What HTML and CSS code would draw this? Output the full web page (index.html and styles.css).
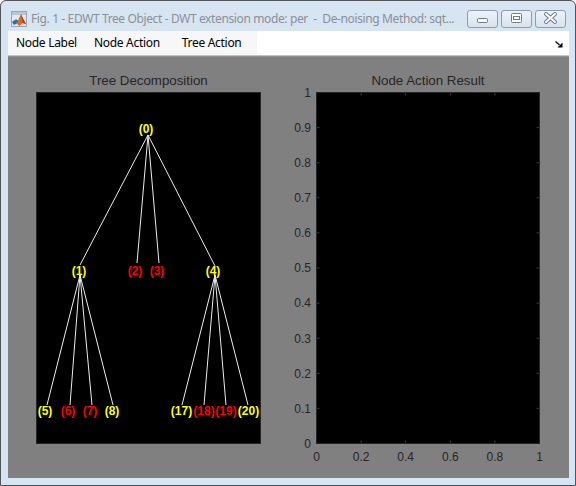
FILE: index.html
```html
<!DOCTYPE html>
<html>
<head>
<meta charset="utf-8">
<link rel="stylesheet" href="styles.css">
</head>
<body>
<div class="window">
  <div class="titlebar">
    <svg class="app-icon" width="16" height="16" viewBox="0 0 16 16">
      <rect x="0.5" y="0.5" width="15" height="15" fill="#dfe7f0" stroke="#9aa6b4"/>
      <rect x="1" y="1" width="14" height="3" fill="#b8c6d6"/>
      <path d="M1 11 L5 8.5 L7 9.5 L10 3 L12 7.5 L15 13 L11.5 12 L8.5 15 L5.5 12.5 Z" fill="#e2681b"/>
      <path d="M1 11 L5 8.5 L7 9.5 L5.5 12.5 L3 14 Z" fill="#2d6bb3"/>
      <path d="M10 3 L12 7.5 L15 13 L11.5 12 Z" fill="#b8431a"/>
    </svg>
    <span class="title">Fig. 1 - EDWT Tree Object - DWT extension mode: per  -  De-noising Method: sqt...</span>
    <div class="win-buttons">
      <div class="win-btn">
        <svg width="31" height="16" viewBox="0 0 31 16"><rect x="10.5" y="7.5" width="10" height="4" rx="1" fill="#fff" stroke="#6f7c8f"/></svg>
      </div>
      <div class="win-btn">
        <svg width="31" height="16" viewBox="0 0 31 16"><rect x="10.5" y="2.5" width="10" height="9" rx="1" fill="#fff" stroke="#6f7c8f"/><rect x="12.5" y="5.5" width="6" height="3" fill="#fff" stroke="#6f7c8f"/></svg>
      </div>
      <div class="win-btn">
        <svg width="31" height="16" viewBox="0 0 31 16"><path d="M11 3 L20 11 M20 3 L11 11" stroke="#6f7c8f" stroke-width="4" stroke-linecap="round"/><path d="M11 3 L20 11 M20 3 L11 11" stroke="#fff" stroke-width="2" stroke-linecap="round"/></svg>
      </div>
    </div>
  </div>
  <div class="client">
    <div class="menubar">
      <div class="menus">
        <span class="menu-item first">Node Label</span>
        <span class="menu-item">Node Action</span>
        <span class="menu-item wide">Tree Action</span>
      </div>
      <svg class="dock" width="8" height="7" viewBox="0 0 8 7"><path d="M0.5 0.5 L4.5 4" stroke="#000" stroke-width="1.3"/><path d="M7.5 1.5 L7.5 6.5 L2.5 6.5 Z" fill="#000"/></svg>
    </div>
    <div class="figure">
      <div class="axes">
        <div class="ax-title">Tree Decomposition</div>
        <svg class="plot" width="225" height="352" viewBox="0 0 225 352">
          <rect x="0.5" y="0.5" width="224" height="351" fill="#000" stroke="#262626"/>
          <g class="edges">
            <line x1="112" y1="43" x2="44" y2="173"/>
            <line x1="112" y1="43" x2="101" y2="171"/>
            <line x1="112" y1="43" x2="123" y2="171"/>
            <line x1="112" y1="43" x2="179" y2="174"/>
            <line x1="44" y1="183" x2="11" y2="313"/>
            <line x1="44" y1="183" x2="34" y2="313"/>
            <line x1="44" y1="183" x2="56" y2="313"/>
            <line x1="44" y1="183" x2="77" y2="313"/>
            <line x1="179" y1="183" x2="146" y2="313"/>
            <line x1="179" y1="183" x2="168" y2="313"/>
            <line x1="179" y1="183" x2="190" y2="313"/>
            <line x1="179" y1="183" x2="212" y2="313"/>
          </g>
          <g class="nodes">
            <text class="y" x="110" y="40.5">(0)</text>
            <text class="y" x="43" y="182.5">(1)</text>
            <text class="r" x="99" y="182.5">(2)</text>
            <text class="r" x="121" y="182.5">(3)</text>
            <text class="y" x="177" y="182.5">(4)</text>
            <text class="y" x="9" y="322.5">(5)</text>
            <text class="r" x="32" y="322.5">(6)</text>
            <text class="r" x="54" y="322.5">(7)</text>
            <text class="y" x="76" y="322.5">(8)</text>
            <text class="y" x="145.5" y="322.5">(17)</text>
            <text class="r" x="168" y="322.5">(18)</text>
            <text class="r" x="190" y="322.5">(19)</text>
            <text class="y" x="212.5" y="322.5">(20)</text>
          </g>
        </svg>
      </div>
      <div class="axes">
        <div class="ax-title right">Node Action Result</div>
        <svg class="plot" width="272" height="380" viewBox="0 0 272 380">
          <rect x="40.5" y="0.5" width="223" height="351" fill="#000" stroke="#262626"/>
          <g class="ticks">
            <path d="M85.1 1 v2.5 M129.7 1 v2.5 M174.3 1 v2.5 M218.9 1 v2.5 M85.1 351 v-2.5 M129.7 351 v-2.5 M174.3 351 v-2.5 M218.9 351 v-2.5"/>
            <path d="M41 35.6 h2.5 M41 70.7 h2.5 M41 105.8 h2.5 M41 140.9 h2.5 M41 176 h2.5 M41 211.1 h2.5 M41 246.2 h2.5 M41 281.3 h2.5 M41 316.4 h2.5"/>
            <path d="M263 35.6 h-2.5 M263 70.7 h-2.5 M263 105.8 h-2.5 M263 140.9 h-2.5 M263 176 h-2.5 M263 211.1 h-2.5 M263 246.2 h-2.5 M263 281.3 h-2.5 M263 316.4 h-2.5"/>
          </g>
          <g class="ylabels">
            <text x="35" y="4.8">1</text>
            <text x="35" y="39.9">0.9</text>
            <text x="35" y="75">0.8</text>
            <text x="35" y="110.1">0.7</text>
            <text x="35" y="145.2">0.6</text>
            <text x="35" y="180.3">0.5</text>
            <text x="35" y="215.4">0.4</text>
            <text x="35" y="250.5">0.3</text>
            <text x="35" y="285.6">0.2</text>
            <text x="35" y="320.7">0.1</text>
            <text x="35" y="355.8">0</text>
          </g>
          <g class="xlabels">
            <text x="40.5" y="369">0</text>
            <text x="85.1" y="369">0.2</text>
            <text x="129.7" y="369">0.4</text>
            <text x="174.3" y="369">0.6</text>
            <text x="218.9" y="369">0.8</text>
            <text x="263.5" y="369">1</text>
          </g>
        </svg>
      </div>
    </div>
  </div>
</div>
</body>
</html>
```

FILE: styles.css
```css
* { box-sizing: border-box; margin: 0; padding: 0; }
html, body { width: 576px; height: 486px; overflow: hidden; background: #fff; }

.window {
  width: 576px;
  height: 486px;
  border: 1px solid #50555c;
  border-radius: 6px 6px 0 0;
  background: #d7e4f2;
  display: flex;
  flex-direction: column;
}

.titlebar {
  height: 30px;
  flex: none;
  display: flex;
  align-items: flex-start;
}
.app-icon { margin: 10px 0 0 10px; flex: none; }
.title {
  margin: 10px 0 0 4px;
  font: 12px/16px "Noto Sans", sans-serif;
  letter-spacing: -0.38px;
  color: #8b9097;
  white-space: pre;
  flex: none;
}
.win-buttons { display: flex; gap: 3px; margin: 9px 9px 0 auto; flex: none; }
.win-btn {
  width: 31px;
  height: 18px;
  border: 1px solid #8c9cb2;
  border-radius: 3px;
  background: linear-gradient(#eef3f9, #d8e2ee);
  display: flex;
  align-items: center;
  justify-content: center;
  overflow: hidden;
}
.win-btn svg { flex: none; }

.client {
  flex: 1;
  margin: 0 6px 7px 7px;
  display: flex;
  flex-direction: column;
}

.menubar {
  height: 25px;
  flex: none;
  background: #fff;
  border-bottom: 1px solid #c3c3c3;
  display: flex;
  align-items: stretch;
}
.menus { width: 249px; background: #f7f7f7; display: flex; flex: none; }
.menu-item {
  padding: 0 8px;
  font: 12px/24px "Noto Sans", sans-serif;
  letter-spacing: -0.3px;
  color: #000;
  white-space: nowrap;
  flex: none;
}
.menu-item.first { padding-right: 9px; }
.menu-item.wide { padding-left: 14px; }
.dock { margin: 10px 6px 0 auto; flex: none; }

.figure {
  flex: 1;
  background: #808080;
  border-top: 1px solid #8f8f8f;
  display: flex;
  align-items: flex-start;
  gap: 15px;
  padding: 16px 0 0 28px;
}
.axes { display: flex; flex-direction: column; }
.ax-title {
  height: 19px;
  font: 13.3px/16px "Liberation Sans", Arial, sans-serif;
  color: #262626;
  text-align: center;
}
.ax-title.right { margin-left: 40px; width: 224px; }
.plot { display: block; overflow: visible; }

.edges line { stroke: #ececec; stroke-width: 1; }
.nodes text {
  font: bold 12px "Liberation Sans", Arial, sans-serif;
  text-anchor: middle;
}
.nodes .y { fill: #ffff00; }
.nodes .r { fill: #ff0000; }

.ticks path { stroke: #3a3a3a; stroke-width: 1; fill: none; }
.ylabels text, .xlabels text {
  font: 12px "Liberation Sans", Arial, sans-serif;
  fill: #262626;
}
.ylabels text { text-anchor: end; }
.xlabels text { text-anchor: middle; }
```
